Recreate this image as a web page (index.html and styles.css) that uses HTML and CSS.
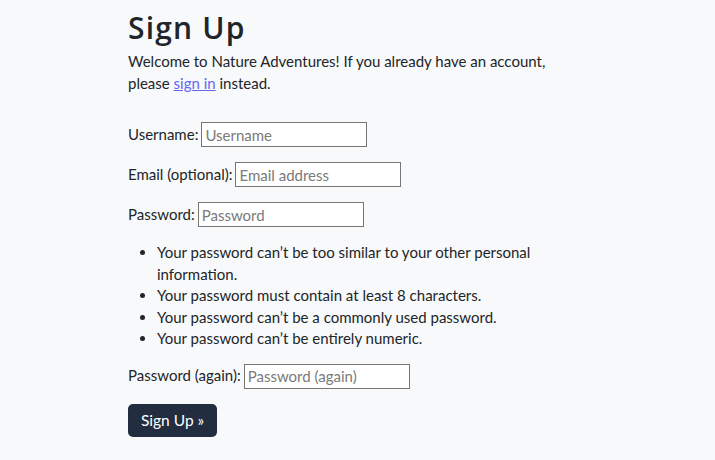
FILE: index.html
```html
<!DOCTYPE html>
<html lang="en">
<head>
<meta charset="utf-8">
<title>Sign Up</title>
<link rel="stylesheet" href="styles.css">
</head>
<body>
<main class="page">
  <h1 class="title">Sign Up</h1>
  <p class="intro"><span>Welcome to Nature Adventures! If you already have an account,</span> <span>please <a href="#" class="link">sign in</a> instead.</span></p>
  <form class="signup">
    <p class="row"><label for="u">Username:</label> <input id="u" class="field" type="text" placeholder="Username"></p>
    <p class="row"><label for="e">Email (optional):</label> <input id="e" class="field" type="email" placeholder="Email address"></p>
    <p class="row"><label for="p">Password:</label> <input id="p" class="field" type="password" placeholder="Password"></p>
    <ul class="rules">
      <li>Your password can’t be too similar to your other personal information.</li>
      <li>Your password must contain at least 8 characters.</li>
      <li>Your password can’t be a commonly used password.</li>
      <li>Your password can’t be entirely numeric.</li>
    </ul>
    <p class="row"><label for="p2">Password (again):</label> <input id="p2" class="field" type="password" placeholder="Password (again)"></p>
    <button type="submit" class="btn">Sign Up &raquo;</button>
  </form>
</main>
</body>
</html>
```
FILE: styles.css
```css
html, body {
  margin: 0;
  padding: 0;
  background: #f8f9fa;
}
body {
  font-family: "Lato", "Liberation Sans", sans-serif;
  font-size: 15px;
  line-height: 21.5px;
  color: #212529;
}
.page {
  width: 450px;
  margin-left: 128px;
  padding-top: 10px;
}
.title {
  font-family: "Open Sans", "Noto Sans", sans-serif;
  font-weight: 600;
  font-size: 30px;
  line-height: 36px;
  margin: 0 0 5px;
  letter-spacing: 1.2px;
}
.intro {
  margin: 0 0 28px;
}
.link {
  color: #6366f1;
  text-decoration: underline;
}
.row {
  margin: 0 0 15px;
  display: flex;
  align-items: center;
  gap: 3px;
  height: 25px;
}
.field {
  box-sizing: border-box;
  width: 166px;
  height: 25px;
  border: 1px solid #767676;
  border-radius: 0;
  background: #fff;
  font-family: inherit;
  font-size: 15px;
  padding: 1px 3px;
  margin: 0;
  color: #212529;
}
.field::placeholder {
  color: #7a7a7a;
}
.rules {
  margin: 0 0 14px;
  padding-left: 29px;
}
.btn {
  font-family: inherit;
  font-size: 15.5px;
  color: #fff;
  background: #222d3f;
  border: none;
  border-radius: 5px;
  height: 33px;
  padding: 0 13px;
  margin-top: 0;
  cursor: pointer;
}
```
